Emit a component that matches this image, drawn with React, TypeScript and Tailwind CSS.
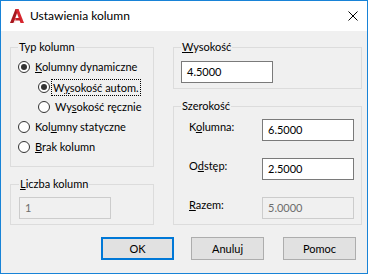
import { ReactNode } from "react";

const font = "font-['Segoe_UI',Lato,'Liberation_Sans',sans-serif]";

const Radio = (props: { checked?: boolean; indent?: boolean; focused?: boolean; children: ReactNode }) => {
	return (
		<div className={`flex h-[20px] items-center ${props.indent ? "pl-[20px]" : ""}`}>
			<span className="flex h-[12px] w-[12px] shrink-0 items-center justify-center rounded-full border border-[#333333] bg-white">
				{props.checked && <span className="h-[6px] w-[6px] rounded-full bg-[#333333]" />}
			</span>
			{props.focused ? (
				<span className="ml-[1px] h-[17px] border border-dotted border-black px-[1px] leading-[15px]">{props.children}</span>
			) : (
				<span className="ml-[5px] leading-[16px]">{props.children}</span>
			)}
		</div>
	);
};

const TextBox = (props: { value: string; disabled?: boolean; className?: string }) => {
	return (
		<div
			className={`flex h-[22px] w-[92px] items-center border pl-[5px] leading-[16px] ${
				props.disabled ? "border-[#cccccc] bg-[#f0f0f0] text-[#6d6d6d]" : "border-[#7a7a7a] bg-white text-black"
			} ${props.className ?? ""}`}
		>
			{props.value}
		</div>
	);
};

const Group = (props: { title: ReactNode; className?: string; children: ReactNode }) => {
	return (
		<fieldset className={`border border-[#dcdcdc] ${props.className ?? ""}`}>
			<legend className="px-[1px] leading-[16px]">{props.title}</legend>
			{props.children}
		</fieldset>
	);
};

const Button = (props: { primary?: boolean; className?: string; children: ReactNode }) => {
	return (
		<div
			className={`flex h-[23px] w-[73px] items-center justify-center bg-[#e1e1e1] leading-[16px] ${
				props.primary ? "border-2 border-[#0078d7]" : "border border-[#adadad]"
			} ${props.className ?? ""}`}
		>
			{props.children}
		</div>
	);
};

const AcadLogo = () => (
	<svg width="16" height="16" viewBox="0 0 16 16">
		<polygon points="1,15 6.5,1 9.5,1 4.5,15" fill="#a8161d" />
		<polygon points="6.5,1 9.5,1 15,15 11.5,15" fill="#d7262e" />
		<polygon points="5,10 11,10 12,12.5 4,12.5" fill="#c21d25" />
		<polygon points="4.5,15 6.2,10.5 7.4,10.5 6.2,15" fill="#f3c6c8" opacity="0.5" />
	</svg>
);

const App = () => {
	return (
		<div className={`${font} flex h-[274px] w-[368px] flex-col border border-[#1883d7] bg-[#f0f0f0] text-[11px] text-black`}>
			<div className="flex h-[30px] shrink-0 items-center bg-white pl-[8px] text-[12px]">
				<AcadLogo />
				<span className="ml-[5px] leading-[16px]">Ustawienia kolumn</span>
				<svg className="ml-auto mr-[9px]" width="10" height="10" viewBox="0 0 10 10">
					<path d="M0.5 0.5 L9.5 9.5 M9.5 0.5 L0.5 9.5" stroke="#000" strokeWidth="1" />
				</svg>
			</div>

			<div className="flex gap-[19px] pl-[9px] pt-[8px]">
				<div className="flex w-[144px] flex-col gap-[9px]">
					<Group title="Typ kolumn" className="pb-[9px] pl-[7px] pt-[2px]">
						<Radio checked>
							<u>K</u>olumny dynamiczne
						</Radio>
						<Radio checked indent focused>
							W<u>y</u>sokość autom.
						</Radio>
						<Radio indent>
							Wy<u>s</u>okość ręcznie
						</Radio>
						<Radio>
							Kol<u>u</u>mny statyczne
						</Radio>
						<Radio>
							<u>B</u>rak kolumn
						</Radio>
					</Group>
					<Group
						title={
							<>
								<u>L</u>iczba kolumn
							</>
						}
						className="pb-[5px] pl-[8px] pt-[5px]"
					>
						<TextBox value="1" disabled />
					</Group>
				</div>

				<div className="flex w-[189px] flex-col gap-[9px]">
					<Group
						title={
							<>
								<u>W</u>ysokość
							</>
						}
						className="pb-[5px] pl-[7px] pt-[6px]"
					>
						<TextBox value="4.5000" />
					</Group>
					<Group title="Szerokość" className="pb-[5px] pl-[7px] pt-[5px]">
						<div className="flex flex-col gap-[17px] pl-[8px]">
							<div className="flex items-start">
								<span className="w-[73px] leading-[16px]">
									K<u>o</u>lumna:
								</span>
								<TextBox value="6.5000" />
							</div>
							<div className="flex items-start">
								<span className="w-[73px] leading-[16px]">
									O<u>d</u>stęp:
								</span>
								<TextBox value="2.5000" />
							</div>
							<div className="flex items-start">
								<span className="w-[73px] leading-[16px]">
									<u>R</u>azem:
								</span>
								<TextBox value="5.0000" disabled />
							</div>
						</div>
					</Group>
				</div>
			</div>

			<div className="mt-[12px] flex pl-[100px]">
				<Button primary>OK</Button>
				<Button className="ml-[17px]">Anuluj</Button>
				<Button className="ml-[19px]">Pomoc</Button>
			</div>
		</div>
	);
};

export default App;
